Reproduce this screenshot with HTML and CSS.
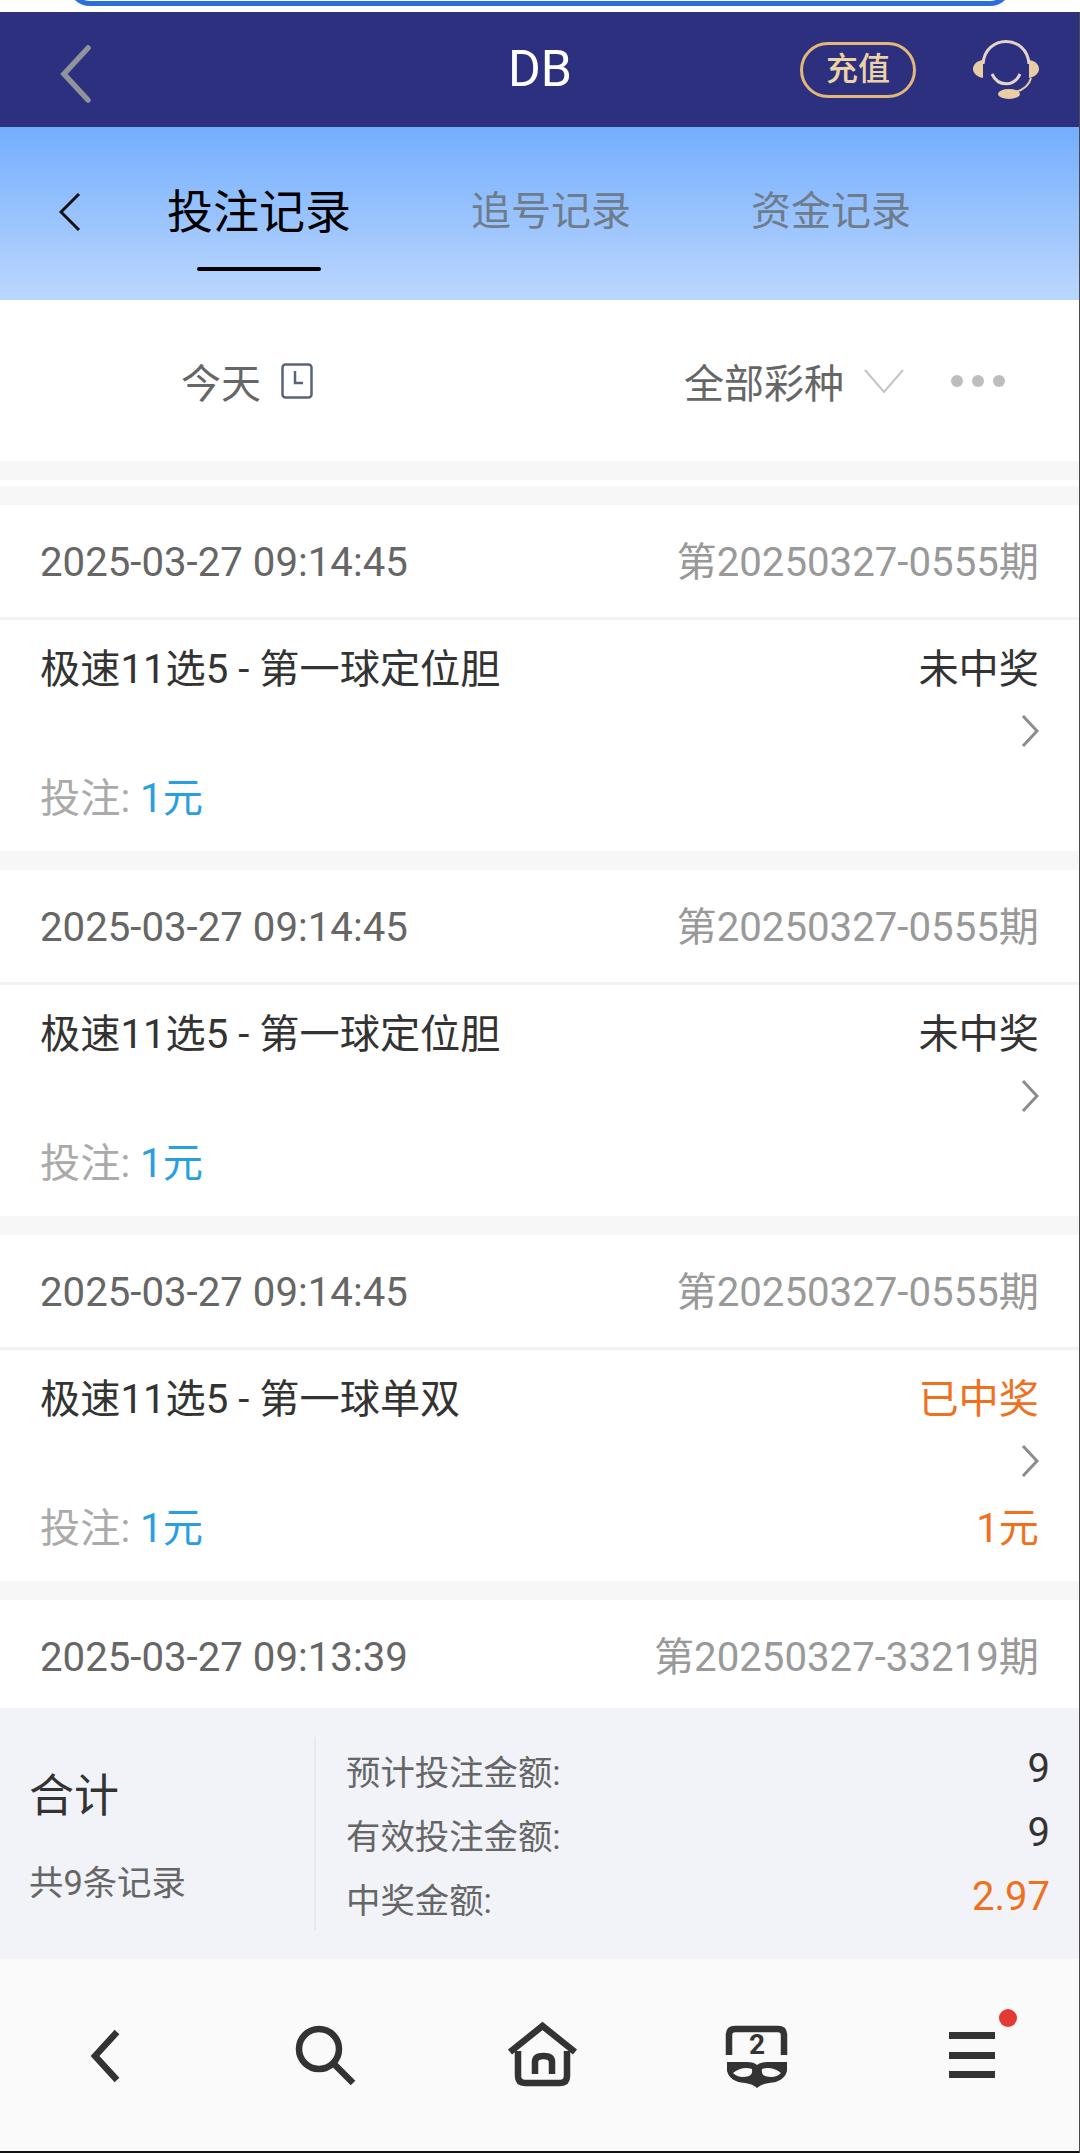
FILE: index.html
```html
<!DOCTYPE html>
<html lang="zh-CN">
<head>
    <meta charset="utf-8">
    <title>投注记录</title>
    <link rel="stylesheet" href="styles.css">
</head>
<body>
<div id="page">
    <div class="url-strip"><div class="url-pill"></div></div>

    <header class="navbar">
        <div class="navbar-left">
            <svg width="32" height="58" viewBox="0 0 32 58"><polyline points="28,3 4,29 28,55" class="nav-back"/></svg>
        </div>
        <div class="navbar-title">DB</div>
        <div class="navbar-right">
            <span class="recharge">充值</span>
            <svg width="66" height="60" viewBox="0 0 66 60">
                <path d="M10 24 C12 -6 54 -6 56 24" class="hs-arc"/>
                <path d="M19 34 C25 47 41 47 47 34" class="hs-arc"/>
                <path d="M10 20 C3 21 0 25 0 29 C0 33 4 37 10 38 Z" class="hs-fill"/>
                <path d="M56 20 C63 21 66 25 66 29 C66 33 62 37 56 38 Z" class="hs-fill"/>
                <path d="M58 38 C56 46 50 50 42 52" class="hs-stem"/>
                <ellipse cx="36" cy="54" rx="11" ry="5" class="hs-fill"/>
            </svg>
        </div>
    </header>

    <nav class="tabs">
        <svg class="tabs-back" width="22" height="38" viewBox="0 0 22 38"><polyline points="20,1 2,19 20,37"/></svg>
        <div class="tab tab-active">投注记录<i class="tab-line"></i></div>
        <div class="tab">追号记录</div>
        <div class="tab">资金记录</div>
    </nav>

    <div class="filter">
        <span>今天</span>
        <svg width="32" height="36" viewBox="0 0 32 36" class="filter-clock">
            <rect x="1.5" y="1.5" width="29" height="33" rx="3"/>
            <polyline points="14,8 14,20 22,20"/>
        </svg>
        <span class="filter-lottery">全部彩种</span>
        <svg width="40" height="24" viewBox="0 0 40 24" class="filter-arrow"><polyline points="1,1 20,23 39,1"/></svg>
        <div class="dots"><i></i><i></i><i></i></div>
    </div>

    <div class="filter-gap"></div>

    <div class="list">
        <div class="card">
            <div class="card-head"><span class="card-time">2025-03-27 09:14:45</span><span class="card-period">第20250327-0555期</span></div>
            <div class="card-body">
                <div class="row"><span class="card-name">极速11选5 - 第一球定位胆</span><span class="card-name">未中奖</span></div>
                <svg class="card-arrow" width="18" height="32" viewBox="0 0 18 32"><polyline points="2,1 16,16 2,31"/></svg>
                <div class="row row-bet"><span class="bet-label">投注: <b class="bet-value">1元</b></span></div>
            </div>
        </div>
        <div class="card">
            <div class="card-head"><span class="card-time">2025-03-27 09:14:45</span><span class="card-period">第20250327-0555期</span></div>
            <div class="card-body">
                <div class="row"><span class="card-name">极速11选5 - 第一球定位胆</span><span class="card-name">未中奖</span></div>
                <svg class="card-arrow" width="18" height="32" viewBox="0 0 18 32"><polyline points="2,1 16,16 2,31"/></svg>
                <div class="row row-bet"><span class="bet-label">投注: <b class="bet-value">1元</b></span></div>
            </div>
        </div>
        <div class="card">
            <div class="card-head"><span class="card-time">2025-03-27 09:14:45</span><span class="card-period">第20250327-0555期</span></div>
            <div class="card-body">
                <div class="row"><span class="card-name">极速11选5 - 第一球单双</span><span class="orange">已中奖</span></div>
                <svg class="card-arrow" width="18" height="32" viewBox="0 0 18 32"><polyline points="2,1 16,16 2,31"/></svg>
                <div class="row row-bet"><span class="bet-label">投注: <b class="bet-value">1元</b></span><span class="orange">1元</span></div>
            </div>
        </div>
        <div class="card">
            <div class="card-head"><span class="card-time">2025-03-27 09:13:39</span><span class="card-period">第20250327-33219期</span></div>
        </div>
    </div>

    <section class="summary">
        <div class="summary-left">
            <div class="summary-title">合计</div>
            <div class="summary-count">共9条记录</div>
        </div>
        <div class="summary-right">
            <div class="summary-row"><span class="summary-label">预计投注金额:</span><span class="summary-value">9</span></div>
            <div class="summary-row"><span class="summary-label">有效投注金额:</span><span class="summary-value">9</span></div>
            <div class="summary-row"><span class="summary-label">中奖金额:</span><span class="summary-value orange">2.97</span></div>
        </div>
    </section>

    <footer class="bottom">
        <div class="bottom-item">
            <svg width="80" height="80" viewBox="0 0 80 80"><polyline points="49,17 27,41 49,65"/></svg>
        </div>
        <div class="bottom-item">
            <svg width="80" height="80" viewBox="0 0 80 80"><circle cx="35" cy="34" r="20"/><line x1="49" y1="48" x2="69" y2="68"/></svg>
        </div>
        <div class="bottom-item">
            <svg width="80" height="80" viewBox="0 0 80 80">
                <polyline points="10,37 42.5,11 75,37"/>
                <path d="M18 36 V61 Q18 68 25 68 H60 Q67 68 67 61 V36"/>
                <path d="M35 59 V47 Q35 41 43.5 41 Q52 41 52 47 V59"/>
            </svg>
        </div>
        <div class="bottom-item">
            <svg width="80" height="80" viewBox="0 0 80 80">
                <path d="M13 40 V20 Q13 14 19 14 H62 Q68 14 68 20 V40"/>
                <text x="41" y="39" class="mask-num">2</text>
                <path class="mask-fill" d="M11 47 H31 Q38 47 41 50 Q44 47 51 47 H71 V56 Q68 67 53 68 Q45 69 41 73 Q37 69 29 68 Q14 67 11 56 Z"/>
                <path class="mask-eye" d="M17 58 Q26 51 36 54 Q37 59 33 61 Q23 64 17 58 Z"/>
                <path class="mask-eye" d="M65 58 Q56 51 46 54 Q45 59 49 61 Q59 64 65 58 Z"/>
            </svg>
        </div>
        <div class="bottom-item">
            <svg width="80" height="80" viewBox="0 0 80 80">
                <rect class="mask-fill" x="17" y="17" width="46" height="7"/>
                <rect class="mask-fill" x="17" y="37" width="46" height="7"/>
                <rect class="mask-fill" x="17" y="56" width="46" height="7"/>
            </svg>
            <span class="badge"></span>
        </div>
    </footer>
    <div class="bottom-edge"></div>
</div>
</body>
</html>
```

FILE: styles.css
```css
* {
    box-sizing: border-box;
}
body {
    margin: 0;
    padding: 0;
    font-family: Roboto, 'Noto Sans CJK SC', sans-serif;
    background: #fff;
}
#page {
    width: 1080px;
    height: 2153px;
    position: relative;
    display: flex;
    flex-direction: column;
    overflow: hidden;
}
/* thin dark edge down the right side of the capture */
#page::after {
    content: "";
    position: absolute;
    top: 12px;
    right: 0;
    bottom: 0;
    width: 1px;
    background: #4a4a4a;
}
svg {
    display: block;
    flex: none;
}

/* top strip, bottom of the address bar */
.url-strip {
    height: 12px;
    background: #fff;
    overflow: hidden;
    flex: none;
}
.url-pill {
    height: 44px;
    margin: -38px 68px 0 68px;
    border: 5px solid #2b6fdd;
    border-radius: 26px;
}

/* navy title bar */
.navbar {
    height: 115px;
    flex: none;
    background: #2c307e;
    display: grid;
    grid-template-columns: 1fr auto 1fr;
    align-items: center;
}
.navbar-left {
    padding: 9px 0 0 60px;
}
.nav-back {
    fill: none;
    stroke: #8f949c;
    stroke-width: 5.5;
    stroke-linecap: round;
}
.navbar-title {
    color: #fff;
    font-size: 50px;
    line-height: 56px;
    padding-bottom: 1px;
}
.navbar-right {
    display: flex;
    justify-content: flex-end;
    align-items: center;
    gap: 57px;
    padding-right: 41px;
}
.recharge {
    width: 116px;
    height: 56px;
    border: 3px solid #e3b77a;
    border-radius: 28px;
    color: #ecd3a6;
    font-size: 32px;
    font-weight: 500;
    line-height: 48px;
    text-align: center;
}
.hs-arc {
    fill: none;
    stroke: #e4d5c8;
    stroke-width: 3;
}
.hs-stem {
    fill: none;
    stroke: #e8cda6;
    stroke-width: 2;
}
.hs-fill {
    fill: #e8cda6;
}

/* tabs */
.tabs {
    height: 173px;
    flex: none;
    padding: 55px 0 0 59px;
    display: flex;
    align-items: flex-start;
    gap: 120px;
    background: linear-gradient(#73aefd, #bcd7fe);
}
.tabs-back {
    margin: 11px -34px 0 0;
    fill: none;
    stroke: #111;
    stroke-width: 3;
}
.tab {
    display: flex;
    flex-direction: column;
    align-items: center;
    color: #6e7c8c;
    font-size: 40px;
    line-height: 60px;
}
.tab-active {
    color: #000;
    font-size: 46px;
}
.tab-line {
    width: 124px;
    height: 4px;
    margin-top: 25px;
    background: #000;
    border-radius: 2px;
}

/* filter row */
.filter {
    height: 161px;
    flex: none;
    padding: 0 75px 0 181px;
    display: flex;
    align-items: center;
    color: #666;
    font-size: 40px;
}
.filter-clock {
    margin-left: 20px;
    fill: none;
    stroke: #5a6478;
    stroke-width: 2.5;
}
.filter-lottery {
    margin-left: auto;
}
.filter-arrow {
    margin-left: 20px;
    fill: none;
    stroke: #c4c4c4;
    stroke-width: 2;
}
.dots {
    margin-left: 47px;
    display: flex;
    gap: 9px;
}
.dots i {
    width: 12px;
    height: 12px;
    border-radius: 50%;
    background: #bdbdbd;
}
.filter-gap {
    height: 44px;
    flex: none;
    background: #f7f7f7;
    position: relative;
}
.filter-gap::after {
    content: "";
    position: absolute;
    left: 0;
    right: 0;
    top: 19px;
    height: 6px;
    background: #fff;
}

/* record list */
.list {
    flex: 1;
    min-height: 0;
    overflow: hidden;
    background: #f7f7f7;
}
.card {
    background: #fff;
    margin-bottom: 19px;
}
.card-head {
    height: 115px;
    padding: 30px 41px 0 40px;
    border-bottom: 3px solid #f2f2f2;
    display: flex;
    justify-content: space-between;
    align-items: baseline;
    font-size: 40.2px;
    line-height: 56px;
}
.card-time {
    color: #666;
}
.card-period {
    color: #999;
}
.card-body {
    height: 231px;
    padding: 22px 41px 0 40px;
}
.row {
    display: flex;
    justify-content: space-between;
    font-size: 40.2px;
    line-height: 56px;
}
.row-bet {
    margin-top: 24px;
}
.card-name {
    color: #333;
}
.card-arrow {
    margin: 17px 0 0 auto;
    fill: none;
    stroke: #8c8c8c;
    stroke-width: 3;
}
.bet-label {
    color: #aaa;
}
.bet-value {
    color: #2a9ee2;
    font-weight: normal;
}
.orange {
    color: #f0701e;
}

/* totals */
.summary {
    height: 251px;
    flex: none;
    background: #f1f3f9;
    padding-top: 29px;
    display: flex;
    align-items: flex-start;
}
.summary-left {
    width: 316px;
    height: 193px;
    flex: none;
    padding-left: 29px;
    border-right: 2px solid #e8e9ee;
}
.summary-title {
    color: #333;
    font-size: 45px;
    line-height: 60px;
    margin-top: 30px;
}
.summary-count {
    color: #666;
    font-size: 34.4px;
    line-height: 50px;
    margin-top: 31px;
}
.summary-right {
    flex: 1;
    padding: 0 30px;
}
.summary-row {
    height: 64px;
    display: flex;
    justify-content: space-between;
    align-items: center;
}
.summary-label {
    color: #666;
    font-size: 34.4px;
    line-height: 48px;
    padding-top: 8px;
}
.summary-value {
    color: #333;
    font-size: 40px;
    line-height: 48px;
}
.summary-value.orange {
    color: #f0701e;
}

/* browser toolbar */
.bottom {
    height: 192px;
    flex: none;
    background: #fafafa;
    display: grid;
    grid-template-columns: repeat(5, 1fr);
    align-items: center;
    justify-items: center;
}
.bottom-item {
    position: relative;
}
.bottom-item svg {
    fill: none;
    stroke: #333;
    stroke-width: 6.5;
}
.bottom-item .mask-fill {
    fill: #333;
    stroke: none;
}
.bottom-item .mask-eye {
    fill: #fafafa;
    stroke: none;
}
.bottom-item .mask-num {
    fill: #333;
    stroke: none;
    font-size: 28px;
    font-weight: bold;
    text-anchor: middle;
}
.badge {
    position: absolute;
    left: 67px;
    top: -6px;
    width: 18px;
    height: 18px;
    border-radius: 50%;
    background: #e53935;
}
.bottom-edge {
    height: 2px;
    flex: none;
    background: #111;
}
```
